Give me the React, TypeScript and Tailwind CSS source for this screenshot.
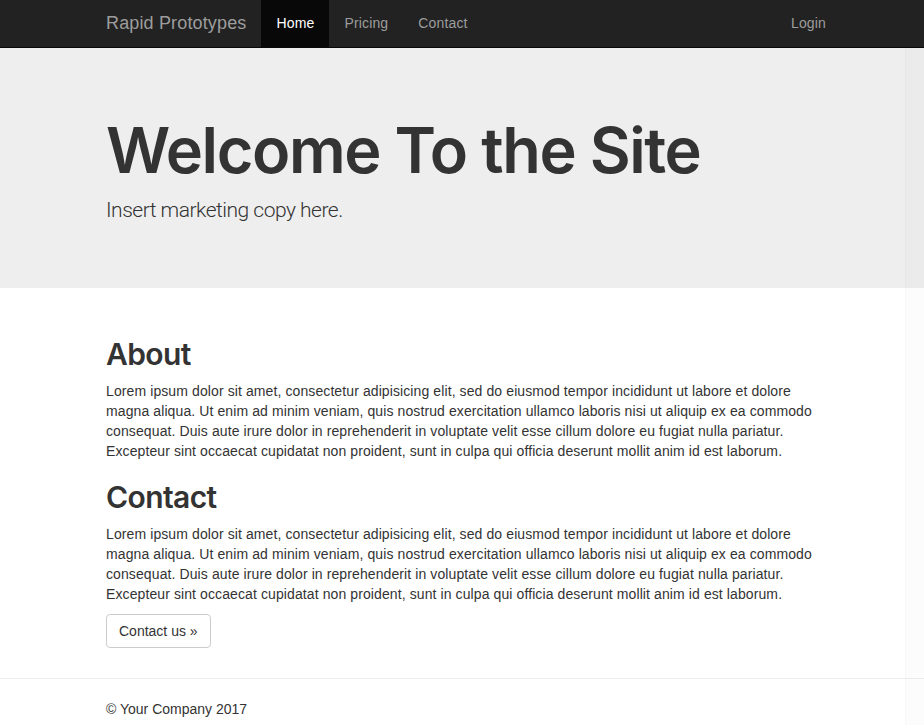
export default function App() {
  const lorem = [
    "Lorem ipsum dolor sit amet, consectetur adipisicing elit, sed do eiusmod tempor incididunt ut labore et dolore",
    "magna aliqua. Ut enim ad minim veniam, quis nostrud exercitation ullamco laboris nisi ut aliquip ex ea commodo",
    "consequat. Duis aute irure dolor in reprehenderit in voluptate velit esse cillum dolore eu fugiat nulla pariatur.",
    "Excepteur sint occaecat cupidatat non proident, sunt in culpa qui officia deserunt mollit anim id est laborum.",
  ];

  const Lorem = () => (
    <p className="text-[14px] leading-[20px] tracking-[0.1px] mb-[10px]">
      {lorem.map((line, i) => (
        <span key={i}>
          {line}
          {i < lorem.length - 1 && <br />}
        </span>
      ))}
    </p>
  );

  return (
    <div className="relative min-h-[725px] bg-white text-[#333] font-['Liberation_Sans',Arial,sans-serif]">
      {/* Navbar */}
      <nav className="h-[48px] bg-[#222] border-b border-[#080808]">
        <div className="ml-[91px] w-[750px] h-full flex items-stretch justify-between tracking-[0.15px]">
          <div className="flex items-stretch">
            <a className="pl-[15px] pr-[15px] flex items-center text-[18px] text-[#9d9d9d]">Rapid Prototypes</a>
            <a className="px-[15px] flex items-center text-[14px] text-white bg-[#080808]">Home</a>
            <a className="px-[15px] flex items-center text-[14px] text-[#9d9d9d]">Pricing</a>
            <a className="px-[15px] flex items-center text-[14px] text-[#9d9d9d]">Contact</a>
          </div>
          <a className="px-[15px] flex items-center text-[14px] text-[#9d9d9d]">Login</a>
        </div>
      </nav>

      {/* Jumbotron */}
      <div className="bg-[#eee] pt-[48px] pb-[48px]">
        <div className="ml-[91px] w-[750px] px-[15px]">
          <h1 className="text-[63px] leading-[69px] font-semibold tracking-[-1.4px] mt-[20px] mb-[10px] font-['Inter',sans-serif]">
            Welcome To the Site
          </h1>
          <p className="text-[21px] leading-[30px] font-light tracking-[-0.5px] mb-[15px] font-['Roboto','Liberation_Sans',sans-serif]">
            Insert marketing copy here.
          </p>
        </div>
      </div>

      {/* Content */}
      <div className="ml-[91px] w-[750px] px-[15px] pt-[30px]">
        <h2 className="text-[30px] leading-[33px] font-semibold tracking-[-0.6px] mt-[20px] mb-[10px] font-['Inter',sans-serif]">About</h2>
        <Lorem />
        <h2 className="text-[30px] leading-[33px] font-semibold tracking-[-0.6px] mt-[20px] mb-[10px] font-['Inter',sans-serif]">Contact</h2>
        <Lorem />
        <p className="mb-[10px]">
          <a className="inline-block px-[12px] py-[6px] text-[14px] leading-[20px] border border-[#ccc] rounded-[4px] bg-white">
            Contact us »
          </a>
        </p>
      </div>

      <hr className="mt-[30px] mb-[20px] border-t border-[#eee]" />

      <footer className="ml-[91px] w-[750px] px-[15px]">
        <p className="text-[14px] leading-[20px]">© Your Company 2017</p>
      </footer>

      {/* overlay scrollbar track */}
      <div className="absolute right-0 top-[48px] bottom-0 w-[19px] bg-black/[0.012] border-l border-black/[0.02]" />
    </div>
  );
}
